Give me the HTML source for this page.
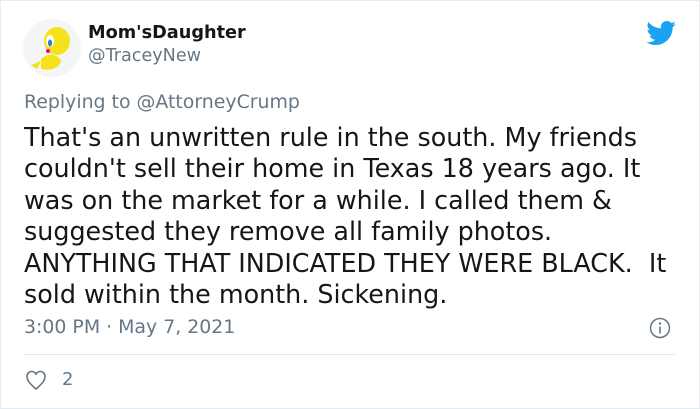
<html><head><style>
body{margin:0;width:700px;height:409px;background:#fff;font-family:"DejaVu Sans","Liberation Sans",sans-serif;overflow:hidden}
.card{position:absolute;left:0;top:0;width:698px;height:407px;border:1px solid #e6ecf0;}
.t{position:absolute;white-space:nowrap}
</style></head><body><div class="card"></div>
<svg class="t" style="left:23px;top:19px" width="58" height="58" viewBox="0 0 58 58">
<circle cx="29" cy="29" r="29" fill="#f4f5f6"/>
<ellipse cx="34" cy="22" rx="13" ry="14" fill="#f5e21a"/>
<path d="M18 40 C24 34,34 34,38 42 C36 50,26 52,18 50 Z" fill="#f5e21a"/>
<ellipse cx="27" cy="22" rx="4" ry="6" fill="#fff"/>
<ellipse cx="27" cy="24" rx="2" ry="3.5" fill="#2a7cc7"/>
<circle cx="25" cy="32" r="2" fill="#f08"/>
<path d="M8 46 L18 42 L14 50 Z" fill="#f5e21a"/>
</svg>
<div class="t" style="left:88px;top:23px;font-size:17.7px;font-weight:bold;color:#14171a">Mom'sDaughter</div>
<div class="t" style="left:88px;top:46px;font-size:17.6px;color:#657786">@TraceyNew</div>
<svg class="t" style="left:646px;top:21px" width="31" height="25" viewBox="0 0 24 20"><path fill="#1da1f2" d="M23.6 2.3c-.9.4-1.8.6-2.8.8 1-.6 1.8-1.5 2.1-2.7-.9.6-2 1-3.1 1.2C19 .6 17.7 0 16.3 0c-2.7 0-4.8 2.2-4.8 4.8 0 .4 0 .8.1 1.1C7.5 5.7 3.9 3.8 1.5.8 1.1 1.5.8 2.4.8 3.3c0 1.7.9 3.2 2.2 4-.8 0-1.5-.2-2.2-.6v.1c0 2.3 1.7 4.3 3.9 4.7-.4.1-.8.2-1.3.2-.3 0-.6 0-.9-.1.6 1.9 2.4 3.3 4.5 3.4-1.7 1.3-3.7 2.1-6 2.1-.4 0-.8 0-1.2-.1 2.1 1.4 4.7 2.2 7.4 2.2 8.9 0 13.7-7.4 13.7-13.7v-.6c1-.7 1.8-1.5 2.5-2.5z"/></svg>
<div class="t" style="left:24px;top:91px;font-size:18.9px;color:#657786">Replying to @AttorneyCrump</div>
<div class="t" style="left:24px;top:122px;font-size:25.4px;line-height:31.4px;color:#14171a">That's an unwritten rule in the south. My friends<br>couldn't sell their home in Texas 18 years ago. It<br>was on the market for a while. I called them &amp;<br>suggested they remove all family photos.<br>ANYTHING THAT INDICATED THEY WERE BLACK.&nbsp; It<br>sold within the month. Sickening.</div>
<div class="t" style="left:24px;top:316px;font-size:18.9px;color:#657786">3:00 PM · May 7, 2021</div>
<svg class="t" style="left:649px;top:317px" width="22" height="22" viewBox="0 0 22 22"><circle cx="11" cy="11" r="9.5" fill="none" stroke="#657786" stroke-width="1.5"/><circle cx="11" cy="6.5" r="1.2" fill="#657786"/><path d="M11 9.5v7" stroke="#657786" stroke-width="1.6"/></svg>
<div class="t" style="left:24px;top:354px;width:651px;height:1px;background:#e1e8ed"></div>
<svg class="t" style="left:24px;top:368px" width="24" height="24" viewBox="0 0 24 24"><path d="M12 21C5 15 3 12 3 8.5 3 5.5 5.3 3.5 7.700 3.5c2 0 3.4 1.2 4.3 2.6.9-1.4 2.3-2.6 4.3-2.6 2.4 0 4.7 2 4.7 5 0 3.5-2 6.5-9 12.5z" fill="none" stroke="#657786" stroke-width="1.6"/></svg>
<div class="t" style="left:62px;top:369px;font-size:18px;color:#657786">2</div>
</body></html>
